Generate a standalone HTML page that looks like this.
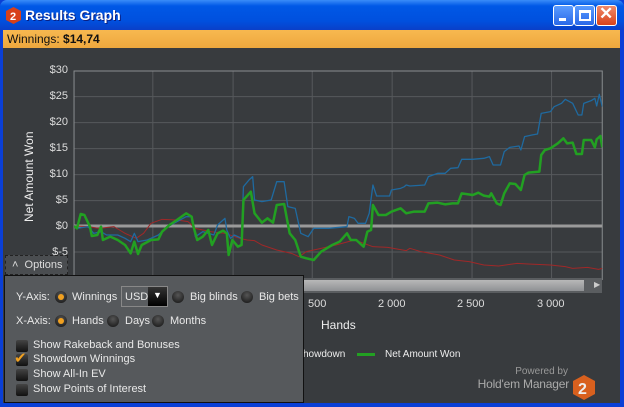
<!DOCTYPE html>
<html><head><style>
*{margin:0;padding:0;box-sizing:border-box}
body{width:624px;height:407px;overflow:hidden;background:#0a3fd6;font-family:"Liberation Sans",sans-serif;position:relative}
.title{position:absolute;left:0;top:0;width:624px;height:30px;background:linear-gradient(#3a8cf8,#0058e6 20%,#0050de 70%,#0a3fc8);border-radius:7px 7px 0 0}
.title .t{position:absolute;left:25px;top:7px;color:#fff;font-weight:bold;font-size:14px;text-shadow:1px 1px #0a1e80}
.btn{position:absolute;top:5px;width:21px;height:21px;border:1px solid #fff;border-radius:3px;background:linear-gradient(#5a9cff,#2a68e8)}
.win{position:absolute;left:3px;top:30px;width:617px;height:18px;background:linear-gradient(#f7b850,#eea83e);font-size:12px;padding:2px 4px;color:#111}
.main{position:absolute;left:3px;top:48px;width:617px;height:355px;background:#383b3e}
.yl{position:absolute;color:#ddd;font-size:11px;width:30px;text-align:right;left:38px}
.xl{position:absolute;color:#ddd;font-size:11px;top:298px}
.opt{position:absolute;left:4px;top:275px;width:300px;height:128px;background:#56595c;border:1px solid #111;color:#e8e8e8;font-size:11px}
.opt span{position:absolute}
.rad{position:absolute;width:12px;height:12px;border-radius:50%;background:radial-gradient(circle at 50% 35%,#555,#111)}
.rad.on::after{content:"";position:absolute;left:3px;top:3px;width:6px;height:6px;border-radius:50%;background:#f0a020}
.cb{position:absolute;left:11px;width:12px;height:12px;background:linear-gradient(#444,#111);border-radius:2px}
</style></head><body>
<div class="title">
<svg style="position:absolute;left:6px;top:7px" width="15" height="17"><polygon points="7.5,0 15,4 15,13 7.5,17 0,13 0,4" fill="#d8401a"/><text x="4" y="13" fill="#fff" font-size="11" font-weight="bold" font-family="Liberation Sans">2</text></svg>
<div class="t">Results Graph</div>
<div class="btn" style="left:553px"><div style="position:absolute;left:5px;top:12px;width:7px;height:3px;background:#fff"></div></div>
<div class="btn" style="left:574px"><div style="position:absolute;left:4px;top:4px;width:12px;height:11px;border:2px solid #fff;border-top-width:3px"></div></div>
<div class="btn" style="left:596px;background:linear-gradient(#f08a6a,#d8421a)"><div style="position:absolute;left:2px;top:-2px;color:#fff;font-size:17px;font-weight:bold">✕</div></div>
</div>
<div class="win">Winnings: <b>$14,74</b></div>
<div class="main"></div>
<div class="yl" style="top:64px">$30</div>
<div class="yl" style="top:90px">$25</div>
<div class="yl" style="top:116px">$20</div>
<div class="yl" style="top:142px">$15</div>
<div class="yl" style="top:168px">$10</div>
<div class="yl" style="top:194px">$5</div>
<div class="yl" style="top:220px">$0</div>
<div class="yl" style="top:246px">$-5</div>
<div style="position:absolute;transform:rotate(-90deg);transform-origin:0 0;color:#eee;font-size:12px;white-space:nowrap;left:22px;top:222px">Net Amount Won</div>
<svg style="position:absolute;left:40px;top:60px" width="580" height="220" viewBox="0 0 1568 660" preserveAspectRatio="none">
<defs><clipPath id="c"><rect x="92" y="33" width="1428" height="627"/></clipPath></defs>
<g stroke="#56595c" fill="none">
<path d="M92 110H1520M92 188H1520M92 266H1520M92 344H1520M92 422H1520M92 576H1520M305 33V660M522 33V660M736 33V660M952 33V660M1168 33V660M1383 33V660" vector-effect="non-scaling-stroke"/>
</g>
<rect x="92" y="33" width="1428" height="627" fill="none" stroke="#8a8d90" vector-effect="non-scaling-stroke"/>
<path d="M92 498H1520" stroke="#9a9a9a" stroke-width="3" vector-effect="non-scaling-stroke"/>
<g clip-path="url(#c)" fill="none" stroke-linejoin="round">
<polyline vector-effect="non-scaling-stroke" stroke="#a02828" stroke-width="1" points="92,498 130,500 160,505 200,500 215,510 230,520 260,535 280,520 300,490 330,478 370,480 400,485 420,505 460,515 500,520 540,535 560,540 580,542 600,555 640,570 680,580 700,590 720,575 760,565 800,555 850,540 880,552 900,560 940,562 990,572 1000,565 1030,575 1080,585 1120,600 1160,605 1200,615 1240,618 1290,610 1320,612 1380,615 1420,620 1440,625 1480,622 1510,628 1520,625"/>
<polyline vector-effect="non-scaling-stroke" stroke="#1f6aa0" stroke-width="1.3" points="92,498 100,505 130,500 145,520 165,515 180,525 210,525 230,535 245,545 255,520 265,545 290,540 320,525 345,500 370,485 395,470 410,470 420,530 440,515 470,525 480,495 500,475 505,510 515,535 525,525 545,535 550,380 565,360 575,350 580,420 600,425 625,420 640,365 660,365 670,440 690,445 705,520 725,530 740,505 780,505 830,500 835,470 850,475 860,490 880,490 890,460 900,375 910,408 945,408 950,390 975,385 985,380 990,375 1000,378 1040,375 1050,350 1075,340 1095,340 1110,325 1130,323 1140,298 1170,298 1200,295 1215,290 1225,315 1245,315 1255,275 1270,262 1295,258 1300,270 1310,230 1330,225 1345,222 1355,160 1380,155 1390,140 1410,130 1420,118 1440,130 1455,165 1465,165 1470,130 1490,122 1500,115 1505,138 1512,103 1520,140"/>
<polyline vector-effect="non-scaling-stroke" stroke="#22a022" stroke-width="2.5" points="92,498 100,505 110,462 120,465 135,500 140,528 155,525 165,500 170,540 190,530 210,540 230,555 245,580 255,545 265,582 275,555 300,540 320,538 330,515 350,495 370,480 395,460 410,470 415,500 425,540 440,530 455,510 465,555 480,520 495,512 505,520 510,585 520,540 535,560 545,555 550,420 570,395 580,460 600,488 615,475 630,488 640,435 660,432 675,520 690,540 705,590 720,595 740,600 760,575 790,555 810,545 830,520 840,540 855,540 875,560 885,515 895,510 900,435 915,465 935,465 950,455 975,445 990,460 1010,455 1040,455 1050,430 1075,428 1095,433 1115,430 1130,430 1140,400 1170,405 1185,398 1200,407 1215,410 1220,400 1235,430 1245,435 1255,400 1270,370 1285,372 1300,390 1310,345 1320,338 1350,335 1355,285 1365,270 1380,265 1400,250 1415,235 1425,250 1440,248 1450,282 1465,282 1470,240 1490,240 1500,262 1505,238 1515,228 1520,262"/>
</g>
</svg>
<div style="position:absolute;left:70px;top:278px;width:532px;height:15px;background:#5a5d60"></div>
<div style="position:absolute;left:72px;top:280px;width:512px;height:11px;background:linear-gradient(#b8b8b8,#8f9194)"></div>
<div style="position:absolute;left:594px;top:280px;color:#ccc;font-size:8px">▶</div>
<div class="xl" style="left:308px">500</div>
<div class="xl" style="left:378px">2 000</div>
<div class="xl" style="left:457px">2 500</div>
<div class="xl" style="left:537px">3 000</div>
<div style="position:absolute;left:321px;top:318px;color:#eee;font-size:12px">Hands</div>
<div style="position:absolute;left:303px;top:349px;color:#eee;font-size:10px">howdown</div>
<div style="position:absolute;left:357px;top:353px;width:18px;height:3px;background:#22a022"></div>
<div style="position:absolute;left:385px;top:349px;color:#eee;font-size:10px">Net Amount Won</div>
<div style="position:absolute;right:56px;top:366px;color:#999;font-size:10px">Powered by</div>
<div style="position:absolute;right:55px;top:377px;color:#aaa;font-size:12px;letter-spacing:-0.2px">Hold'em Manager</div>
<svg style="position:absolute;left:573px;top:375px" width="22" height="25"><polygon points="11,0 22,6 22,19 11,25 0,19 0,6" fill="#d8601e"/><text x="5" y="19" fill="#eee" font-size="16" font-weight="bold" font-family="Liberation Sans">2</text></svg>
<div style="position:absolute;left:5px;top:255px;width:63px;height:20px;background:#4a4d50;border:1px dashed #222;color:#ddd;font-size:11px;padding:3px 0 0 6px">˄&nbsp;&nbsp;Options</div>
<div class="opt">
<span style="left:11px;top:15px">Y-Axis:</span><div class="rad on" style="left:50px;top:15px"></div><span style="left:67px;top:15px">Winnings</span>
<div style="position:absolute;left:116px;top:10px;width:47px;height:21px;border:1px solid #888;background:#5a5d60"><span style="left:3px;top:4px">USD</span><div style="position:absolute;left:26px;top:0;width:19px;height:19px;background:linear-gradient(#333,#000);color:#fff;font-size:9px;text-align:center;line-height:17px">▼</div></div>
<div class="rad" style="left:167px;top:15px"></div><span style="left:185px;top:15px">Big blinds</span>
<div class="rad" style="left:236px;top:15px"></div><span style="left:254px;top:15px">Big bets</span>
<span style="left:11px;top:39px">X-Axis:</span><div class="rad on" style="left:50px;top:39px"></div><span style="left:67px;top:39px">Hands</span>
<div class="rad" style="left:102px;top:39px"></div><span style="left:120px;top:39px">Days</span>
<div class="rad" style="left:147px;top:39px"></div><span style="left:165px;top:39px">Months</span>
<div class="cb" style="top:64px"></div><span style="left:28px;top:63px">Show Rakeback and Bonuses</span>
<div class="cb" style="top:78px"></div><span style="left:9px;top:73px;color:#f0a020;font-size:15px">✔</span><span style="left:28px;top:77px">Showdown Winnings</span>
<div class="cb" style="top:93px"></div><span style="left:28px;top:92px">Show All-In EV</span>
<div class="cb" style="top:108px"></div><span style="left:28px;top:107px">Show Points of Interest</span>
</div>
</body></html>
